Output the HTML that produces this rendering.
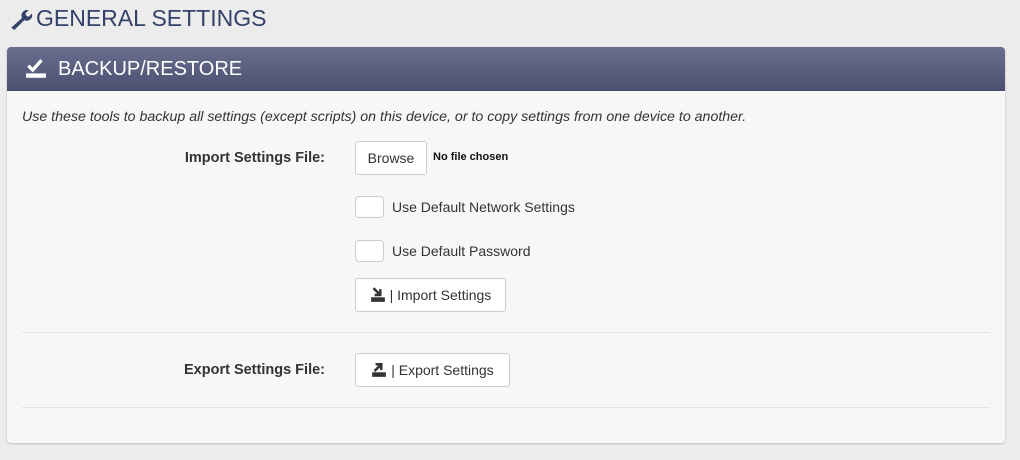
<!DOCTYPE html>
<html><head><style>
body{margin:0;width:1020px;height:460px;background:#ececec;font-family:"Liberation Sans",sans-serif;position:relative;overflow:hidden}
.t{position:absolute;left:9px;top:5px;font-size:23px;color:#34416a;display:flex;align-items:center}
.panel{position:absolute;left:7px;top:47px;width:998px;height:396px;background:#f7f7f7;border-radius:4px;box-shadow:0 1px 2px rgba(0,0,0,.2)}
.hd{height:44px;background:linear-gradient(#6a6e8f,#4b5070);border-radius:4px 4px 0 0;color:#fff;font-size:20px;display:flex;align-items:center}
.it{position:absolute;left:15px;top:62px;font-size:14.2px;font-style:italic;color:#333}
.lbl{position:absolute;font-size:14.5px;font-weight:bold;color:#333;right:680px}
.btn{position:absolute;background:#fff;border:1px solid #ccc;border-radius:3px;font-size:14px;color:#333;display:flex;align-items:center;justify-content:center;box-sizing:border-box}
.cb{position:absolute;left:348px;width:29px;height:22px;background:#fff;border:1px solid #ccc;border-radius:4px;box-sizing:border-box}
.ct{position:absolute;left:385px;font-size:14px;color:#333}
.hr{position:absolute;left:15px;width:968px;height:1px;background:#e4e4e4}
</style></head><body>
<div class="t"><svg width="24" height="24" viewBox="0 0 22 22"><path d="M2 19 L12 10 A5 5 0 0 1 18 3 L15 6 L16 8 L18 9 L21 6 A5 5 0 0 1 14 12 L5 21 Z" fill="#34416a"/></svg><span style="margin-left:3px">GENERAL SETTINGS</span></div>
<div class="panel">
<div class="hd"><svg style="margin-left:18px" width="22" height="20" viewBox="0 0 20 18"><path d="M3 6 L7 10 L15 1" stroke="#fff" stroke-width="3" fill="none"/><rect x="1" y="13" width="18" height="4" fill="#fff"/></svg><span style="margin-left:11px">BACKUP/RESTORE</span></div>
<div class="it">Use these tools to backup all settings (except scripts) on this device, or to copy settings from one device to another.</div>
<div class="lbl" style="top:103px">Import Settings File:</div>
<div class="btn" style="left:348px;top:94px;width:72px;height:34px">Browse</div>
<div style="position:absolute;left:426px;top:104px;font-size:11px;font-weight:bold;color:#111">No file chosen</div>
<div class="cb" style="top:149px"></div><div class="ct" style="top:152px">Use Default Network Settings</div>
<div class="cb" style="top:193px"></div><div class="ct" style="top:196px">Use Default Password</div>
<div class="btn" style="left:348px;top:231px;width:151px;height:34px"><svg width="16" height="16" viewBox="0 0 14 14"><path d="M3 1 L9 7 M4 7 H9 V2" stroke="#333" stroke-width="2.2" fill="none"/><rect x="1" y="9" width="12" height="4" fill="#333"/></svg>&nbsp;| Import Settings</div>
<div class="hr" style="top:285px"></div>
<div class="lbl" style="top:315px">Export Settings File:</div>
<div class="btn" style="left:348px;top:306px;width:155px;height:34px"><svg width="16" height="16" viewBox="0 0 14 14"><path d="M3 8 L9 2 M4 2 H9 V7" stroke="#333" stroke-width="2.2" fill="none"/><rect x="1" y="9" width="12" height="4" fill="#333"/></svg>&nbsp;| Export Settings</div>
<div class="hr" style="top:360px"></div>
</div>
</body></html>
